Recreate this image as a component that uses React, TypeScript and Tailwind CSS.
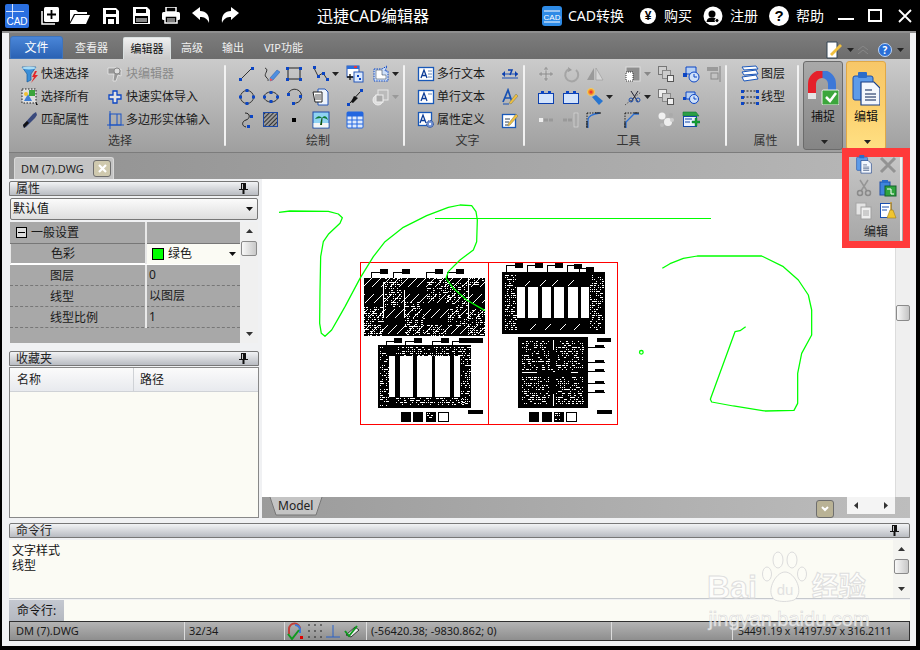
import React from "react";

type P = { children?: React.ReactNode; w?: number; h?: number };
const I = ({ children, w = 18, h = 18 }: P) => (
  <svg width={w} height={h} viewBox={`0 0 ${w} ${h}`} className="block shrink-0">
    {children}
  </svg>
);
const BL = "#0b45c4";
const B = ({ x, y, s = 3 }: { x: number; y: number; s?: number }) => <rect x={x} y={y} width={s} height={s} fill={BL} />;
const Drop = ({ c = "#222" }: { c?: string }) => (
  <svg width={7} height={4} viewBox="0 0 7 4" className="block shrink-0 ml-[2px]">
    <path d="M0 0H7L3.500 4Z" fill={c} />
  </svg>
);

/* title bar icons */
const W = "#ffffff";
const TNew = () => (
  <svg width={18} height={18} viewBox="0 0 18 18" className="block">
    <path d="M1 4V17H14" fill="none" stroke={W} strokeWidth="1.500" />
    <rect x="3" y="0" width="15" height="15" rx="1.500" fill={W} />
    <path d="M10.500 3V12M6 7.500H15" stroke="#000" strokeWidth="1.800" />
  </svg>
);
const TOpen = () => (
  <svg width={20} height={16} viewBox="0 0 20 16" className="block">
    <path d="M0 2H6L8 4H17V6H4L0 14Z" fill={W} />
    <path d="M5 7H20L16 16H0Z" fill={W} />
  </svg>
);
const TSave = () => (
  <svg width={16} height={16} viewBox="0 0 16 16" className="block">
    <path d="M0 0H13L16 3V16H0Z" fill={W} />
    <rect x="3" y="2" width="10" height="4" fill="#000" />
    <rect x="3" y="9" width="10" height="7" fill="#000" />
    <rect x="5" y="11" width="6" height="5" fill={W} />
  </svg>
);
const TSavePdf = () => (
  <svg width={17} height={18} viewBox="0 0 17 18" className="block">
    <path d="M0 0H14L17 3V17H0Z" fill={W} />
    <rect x="3" y="2" width="10" height="4" fill="#000" />
    <rect x="2" y="9" width="13" height="7" fill="#000" />
    <rect x="3" y="11" width="11" height="4" fill="#888" />
  </svg>
);
const TPrint = () => (
  <svg width={18} height={17} viewBox="0 0 18 17" className="block">
    <rect x="4" y="0" width="10" height="5" fill="none" stroke={W} strokeWidth="1.500" />
    <rect x="0" y="5" width="18" height="8" rx="1.500" fill={W} />
    <rect x="3" y="9" width="12" height="7" fill="#000" stroke={W} strokeWidth="1.500" />
    <path d="M5 12H13M5 14H13" stroke={W} />
  </svg>
);
const TUndo = () => (
  <svg width={18} height={17} viewBox="0 0 18 17" className="block">
    <path d="M0 6L8 0V4C14 4 18 8 17 16C15 11 12 10 8 10V13Z" fill={W} />
  </svg>
);
const TRedo = () => (
  <svg width={18} height={17} viewBox="0 0 18 17" className="block">
    <path d="M18 6L10 0V4C4 4 0 8 1 16C3 11 6 10 10 10V13Z" fill={W} />
  </svg>
);
const Logo = () => (
  <div className="relative w-[24px] h-[24px] mt-[1px] rounded-[2px] bg-[#2a6fe0] overflow-hidden flex items-end justify-center">
    <div className="absolute left-[7px] top-0 w-px h-[15px] bg-white/80" />
    <div className="absolute left-[1px] top-[7px] w-[18px] h-px bg-white/80" />
    <span className="text-[10px] leading-[13px] text-white font-['Liberation_Sans',sans-serif]">CAD</span>
  </div>
);

/* select group */
const Funnel = () => (
  <I>
    <path d="M1 2H15L10 9V15L6 17V9Z" fill="#3b8fd8" stroke="#165a9c" strokeWidth=".7" />
    <ellipse cx="8" cy="3" rx="7" ry="1.500" fill="#a9dcf5" />
    <path d="M14 6L11 12H13L10 18L17 10H14L16 6Z" fill="#e2262a" />
  </I>
);
const SelAll = () => (
  <I>
    <rect x="1" y="1" width="14" height="14" fill="#fff8" stroke="#222" strokeDasharray="1.500 1.500" />
    <rect x="8" y="2" width="6" height="6" fill="#3aa43a" />
    <path d="M3 13L7 6L11 13Z" fill="#3d7fd4" />
    <circle cx="5" cy="6" r="2" fill="#f2c230" />
    <path d="M15 14V17H17Z" fill="#111" />
  </I>
);
const Dropper = () => (
  <I>
    <path d="M3 17L2 14L12 3L15 1L16 4L14 7L5 16Z" fill="#39497c" />
    <path d="M3 17L2 14L6 10L8 12Z" fill="#111" />
  </I>
);
const BlockEd = () => (
  <I>
    <path d="M2 3H10L9 7L15 4V11L12 10L10 16H7L8 9H2Z" fill="#989898" stroke="#e8e8e8" strokeWidth=".8" />
    <circle cx="11" cy="6" r="3" fill="#ddd" stroke="#888" />
  </I>
);
const PlusO = () => (
  <I>
    <path d="M7 3H11V7H15V11H11V15H7V11H3V7H7Z" fill="#fff9" stroke={BL} strokeWidth="1.300" />
  </I>
);
const PolyIn = () => (
  <I>
    <rect x="4" y="3" width="11" height="11" fill="none" stroke="#1c55c4" />
    <path d="M1 14H18M4 0V18M11 3V14" stroke="#1c55c4" />
  </I>
);

/* draw group */
const Line = () => (
  <I>
    <path d="M3 14L14 3" stroke="#333" />
    <B x={1} y={13} />
    <B x={13} y={2} />
  </I>
);
const PenCurve = () => (
  <I>
    <path d="M3 3C8 5 1 9 4 12S6 15 6 16" fill="none" stroke="#333" />
    <path d="M8 13L15 5L18 7L11 15L8 16Z" fill="#4e8fe0" stroke="#2a5aa8" strokeWidth=".5" />
    <path d="M8 13L11 15L8 16Z" fill="#e55" />
  </I>
);
const RectI = () => (
  <I>
    <rect x="3" y="3" width="12" height="11" fill="none" stroke="#222" />
    <B x={1} y={2} />
    <B x={14} y={2} />
    <B x={1} y={13} />
    <B x={14} y={13} />
  </I>
);
const Poly = () => (
  <I>
    <path d="M2 3L6 11L11 8L15 14" fill="none" stroke="#333" />
    <B x={1} y={1} />
    <B x={5} y={10} />
    <B x={10} y={7} />
    <B x={14} y={13} />
  </I>
);
const Insert = () => (
  <I>
    <rect x="1" y="1" width="12" height="11" fill="#fff" stroke="#2456b8" />
    <rect x="1" y="1" width="12" height="3" fill="#2f6fd8" />
    <rect x="8" y="1" width="3" height="2" fill="#e33" />
    <rect x="8" y="7" width="9" height="10" fill="#dbe8fb" stroke="#2456b8" />
    <path d="M1 12H7M4 9V15" stroke="#111" strokeWidth="1.300" />
    <rect x="11" y="10" width="2" height="2" fill={BL} />
    <rect x="13" y="13" width="2" height="2" fill={BL} />
  </I>
);
const Region = () => (
  <I>
    <path d="M2 4H10L15 1L13 6H16V16H2Z" fill="#cfe0f8" stroke={BL} strokeDasharray="1.500 1" />
    <path d="M4 5H10V10H14V14H4Z" fill="#fff" stroke="#234" strokeWidth=".5" />
  </I>
);
const Circle = () => (
  <I>
    <circle cx="9" cy="9" r="6.500" fill="none" stroke="#333" />
    <B x={7.500} y={1} />
    <B x={7.500} y={14} />
    <B x={1} y={7.500} />
    <B x={14} y={7.500} />
  </I>
);
const Ellipse = () => (
  <I>
    <ellipse cx="9" cy="9" rx="7" ry="5" fill="none" stroke="#333" />
    <B x={7.500} y={3} />
    <B x={7.500} y={12} />
    <B x={1} y={7.500} />
    <B x={14} y={7.500} />
  </I>
);
const Arc = () => (
  <I>
    <path d="M3 6A7 7 0 1 1 8 15" fill="none" stroke="#333" />
    <B x={2} y={5} />
    <B x={7} y={14} />
    <B x={14} y={7} />
  </I>
);
const Copy = () => (
  <I>
    <path d="M6 1H13L16 4V17H6Z" fill="#eef4fc" stroke="#2456b8" />
    <path d="M1 4H10V14H3Z" fill="#fff" stroke="#222" />
    <path d="M3 7H9M3 9H9M3 11H9" stroke="#555" />
  </I>
);
const Pen = () => (
  <I>
    <path d="M3 16L15 3" stroke="#111" strokeWidth="1" />
    <path d="M5 14L8 8L12 10L7 15Z" fill="#111" />
    <B x={1} y={15} />
    <B x={14} y={1} />
  </I>
);
const GCopy = () => (
  <I>
    <circle cx="6" cy="12" r="5" fill="#ddd" stroke="#eee" />
    <rect x="6" y="2" width="10" height="10" fill="#bbb" stroke="#e8e8e8" />
    <rect x="4" y="7" width="7" height="7" fill="#aaa" stroke="#eee" />
  </I>
);
const Spline = () => (
  <I>
    <path d="M7 2C13 2 12 8 8 9S3 15 8 16" fill="none" stroke="#222" />
    <B x={12} y={4} />
    <B x={9} y={14} />
  </I>
);
const Hatch = () => (
  <I>
    <defs>
      <pattern id="ht" width="3" height="3" patternUnits="userSpaceOnUse" patternTransform="rotate(-45)">
        <rect width="3" height="3" fill="#999" />
        <rect width="3" height="1" fill="#333" />
      </pattern>
    </defs>
    <rect x="1.500" y="1.500" width="14" height="14" fill="url(#ht)" stroke="#1c49a8" />
  </I>
);
const Dot = () => (
  <I>
    <rect x="7" y="7" width="4" height="4" fill="#000" />
  </I>
);
const Palm = () => (
  <I>
    <rect x="1" y="1" width="16" height="16" fill="#8fd3f2" stroke="#1c49a8" />
    <rect x="1.500" y="12" width="15" height="4.500" fill="#f5f5f5" />
    <path d="M8 14L9.500 7H10.500L10 14Z" fill="#115511" />
    <path d="M3 8C6 4 8 5 10 7C12 4 15 5 16 9C13 7 12 7 10 7C8 7 6 7 3 8Z" fill="#0f7a35" />
  </I>
);
const Table = () => (
  <I>
    <rect x="1" y="1" width="16" height="16" rx="1" fill="#dfeafb" stroke="#2266e0" />
    <path d="M1 5H17M1 9H17M1 13H17M6 5V17M11 5V17" stroke="#2266e0" />
    <rect x="1" y="1" width="16" height="4" fill="#2266e0" />
  </I>
);

/* text */
const Doc = ({ l, t }: { l: React.ReactNode; t?: boolean }) => (
  <I>
    <rect x="1.500" y="2.500" width="15" height="13" fill="#fff" stroke="#1858b8" strokeWidth="1.300" />
    <path d="M4 13L7 5L10 13M5 10.500H9" fill="none" stroke="#0e3e98" strokeWidth="1.300" />
    {t ? <path d="M11 6H15" stroke="#6b87b8" /> : l}
  </I>
);
const MText = () => <Doc l={<path d="M11 6H15M11 9H15M11 12H15" stroke="#6b87b8" />} />;
const SText = () => <Doc l={null} t />;
const AttrDef = () => (
  <I>
    <rect x="1.500" y="1.500" width="13" height="13" fill="#fff" stroke="#1858b8" strokeWidth="1.300" />
    <path d="M3 12L6 4L9 12M4 9.500H8" fill="none" stroke="#0e3e98" strokeWidth="1.300" />
    <circle cx="13" cy="13" r="3.500" fill="#6e8ed0" stroke="#2b4f96" strokeDasharray="1.500 .8" />
    <circle cx="13" cy="13" r="1.200" fill="#fff" />
  </I>
);
const Dim = () => (
  <I>
    <path d="M1 9H17" stroke="#1a4fb5" />
    <path d="M1 9L4 6V12Z M17 9L14 6V12Z" fill="#0b3fae" />
    <path d="M1 13H17" stroke="#1a4fb5" />
    <path d="M7 5H11L9 10" fill="none" stroke="#0b3fae" strokeWidth="1.500" />
  </I>
);
const TxtStyle = () => (
  <I>
    <path d="M2 14L7 2L11 14M4 10H10" fill="none" stroke="#1751b3" strokeWidth="1.700" />
    <path d="M8 15L15 6L17 8L10 16Z" fill="#f0c040" stroke="#775" strokeWidth=".5" />
    <path d="M2 16H8" stroke="#1751b3" />
  </I>
);
const TxtEdit = () => (
  <I>
    <rect x="1.500" y="3.500" width="13" height="13" fill="#fff" stroke="#1858b8" strokeWidth="1.300" />
    <path d="M4 8H9M4 11H8M4 14H7" stroke="#345" />
    <path d="M7 13L15 3L17 5L9 14L7 15Z" fill="#f0c040" stroke="#775" strokeWidth=".5" />
  </I>
);

/* tools */
const G = "#9b9b9b";
const Move = () => (
  <I>
    <path d="M8 5H10V8H13V6L17 9L13 12V10H10V13H12L9 17L6 13H8V10H5V12L1 9L5 6V8H8V5H6L9 1L12 5H10" fill={G} stroke="#d4d4d4" strokeWidth=".6" />
  </I>
);
const Rot = () => (
  <I>
    <path d="M6 2L10 5L6 7Z" fill={G} />
    <path d="M7 4A6.500 6.500 0 1 0 14 5" fill="none" stroke="#a5a5a5" strokeWidth="2" />
  </I>
);
const Mirror = () => (
  <I>
    <path d="M8 3L1 15H8Z" fill="#9a9a9a" />
    <path d="M10 3L17 15H10Z" fill="#d6d6d6" stroke="#999" strokeWidth=".6" />
  </I>
);
const Gblock = () => (
  <I>
    <rect x="2" y="2" width="14" height="14" fill="#8e8e8e" stroke="#ddd" />
    <rect x="2" y="7" width="7" height="9" fill="#fff" stroke="#333" strokeDasharray="1 1" />
  </I>
);
const Squares = ({ gray }: { gray?: boolean }) => (
  <I>
    <rect x="1.500" y="1.500" width="8" height="8" fill={gray ? "#cfcfcf" : "#eee"} stroke="#777" />
    <rect x="5.500" y="5.500" width="8" height="8" fill="#ccc" stroke="#888" />
    <rect x="10.500" y="10.500" width="6" height="6" fill="#eee" stroke="#555" />
  </I>
);
const Clock = () => (
  <I>
    <path d="M4 2H14V9H4Z" fill="#b7d0f3" stroke={BL} />
    <B x={1} y={8} s={4} />
    <circle cx="12" cy="12" r="5" fill="#cfe0f8" stroke={BL} />
    <path d="M12 9V12H15" fill="none" stroke={BL} />
  </I>
);
const Clock2 = () => (
  <I>
    <path d="M4 4H13V11H4Z" fill="#b7d0f3" stroke={BL} />
    <B x={1} y={9} s={3} />
    <circle cx="12" cy="11" r="4.500" fill="#cfe0f8" stroke={BL} />
    <path d="M12 8.500V11H14.500" fill="none" stroke={BL} />
  </I>
);
const Dlist = () => (
  <I>
    <rect x="1" y="2" width="11" height="4" fill="#9a9a9a" />
    <rect x="5" y="8" width="7" height="6" fill="none" stroke="#8a8a8a" />
    <path d="M14 1V17" stroke="#999" strokeWidth="1.500" />
  </I>
);
const Battery = () => (
  <I>
    <rect x="1.500" y="5.500" width="15" height="10" fill="#d4e4fc" stroke="#0b3fae" />
    <rect x="4" y="3" width="3" height="3" fill={BL} />
    <rect x="11" y="3" width="3" height="3" fill={BL} />
  </I>
);
const Paint = () => (
  <I>
    <circle cx="5" cy="4" r="3.500" fill="#f4892a" stroke="#f5d35a" />
    <circle cx="5" cy="4" r="1.500" fill="#e33" />
    <path d="M6 9L10 7L17 13L13 17Z" fill="#2875d0" />
  </I>
);
const Scissor = () => (
  <I>
    <path d="M1 17L17 4" stroke="#555" strokeDasharray="1.500 1.500" />
    <path d="M7 3L14 14M14 3L7 14" stroke="#223" />
    <circle cx="7" cy="12" r="2" fill="none" stroke="#1c4fb0" />
    <circle cx="14" cy="12" r="2" fill="none" stroke="#1c4fb0" />
  </I>
);
const Dashes = () => (
  <I>
    <path d="M2 9H6" stroke="#eee" strokeWidth="4" />
    <path d="M7 9H11M12 9H16" stroke="#999" strokeWidth="3" />
  </I>
);
const Dashes2 = () => (
  <I>
    <path d="M1 9H5M6 9H10" stroke="#999" strokeWidth="3" />
    <rect x="12" y="2" width="4" height="14" fill="#aaa" stroke="#ddd" strokeWidth=".6" />
  </I>
);
const Fillet = () => (
  <I>
    <path d="M1 2H14M1 2V17" fill="none" stroke="#111" strokeDasharray="1.300 1.300" />
    <path d="M2 17V9C2 5 6 3 14 2" fill="none" stroke="#2a70d8" strokeWidth="1.300" />
    <path d="M1 17V10M9 2H15" stroke="#111" />
  </I>
);
const Chamfer = () => (
  <I>
    <path d="M1 2H14M1 2V17" fill="none" stroke="#111" strokeDasharray="1.300 1.300" />
    <path d="M2 17V11L10 3H15" fill="none" stroke="#2a70d8" strokeWidth="1.300" />
    <path d="M1 17V11M10 2H15" stroke="#111" />
  </I>
);
const Balls = () => (
  <I>
    <circle cx="5" cy="5" r="3.500" fill="#f0f0f0" />
    <circle cx="11" cy="11" r="4" fill="#eee" />
    <circle cx="14" cy="4" r="2" fill="#aaa" />
    <circle cx="5" cy="14" r="2" fill="#bbb" />
    <circle cx="15" cy="9" r="2" fill="#ccc" />
  </I>
);
const GreenAdd = () => (
  <I>
    <path d="M1 1H14L17 5H1Z" fill="#2c9f47" stroke="#127a30" strokeWidth=".6" />
    <rect x="1.500" y="5.500" width="13" height="10" fill="#eaf2ff" stroke="#1348a8" />
    <path d="M3 8H10M3 11H8" stroke="#1348a8" />
    <path d="M10 10H13V7H15V10H18V12H15V15H13V12H10Z" fill="#16a02e" stroke="#074" strokeWidth=".4" />
  </I>
);
const Layers = () => (
  <I>
    <path d="M1 2L15 1L17 4L3 5Z" fill="#fff" stroke="#1b57bb" />
    <path d="M1 7L15 5L17 9L3 10Z" fill="#fff" stroke="#1b57bb" />
    <path d="M1 12L15 10L17 14L3 16Z" fill="#fff" stroke="#1b57bb" />
  </I>
);
const LineT = () => (
  <I>
    <path d="M2 3H16M2 15H16M2 9H16" stroke="#222" strokeDasharray="2 1.500" />
    <B x={0} y={2} />
    <B x={15} y={2} />
    <B x={0} y={8} />
    <B x={15} y={8} />
    <B x={0} y={14} />
    <B x={15} y={14} />
  </I>
);

const Magnet = () => (
  <svg width={32} height={34} viewBox="0 0 32 34" className="block">
    <defs>
      <linearGradient id="mg" x1="0" x2="1" y1="0" y2="0">
        <stop offset="0" stopColor="#e5202a" />
        <stop offset=".5" stopColor="#e5202a" />
        <stop offset=".55" stopColor="#3d78d8" />
        <stop offset="1" stopColor="#3d78d8" />
      </linearGradient>
    </defs>
    <path d="M5 26V13A10 10 0 0 1 25 13V20" fill="none" stroke="url(#mg)" strokeWidth="8" />
    <rect x="1" y="22" width="8" height="6" fill="#e4e4e4" />
    <rect x="15" y="19" width="17" height="15" rx="1.500" fill="#3ca63c" stroke="#eee" />
    <path d="M19 26L23 30L29 22" fill="none" stroke="#fff" strokeWidth="2.500" />
  </svg>
);
const Clip = ({ s = 1 }: { s?: number }) => (
  <svg width={28 * s} height={34 * s} viewBox="0 0 28 34" className="block">
    <rect x="1" y="4" width="20" height="24" rx="2" fill="#5d9be8" stroke="#1e4ea6" />
    <rect x="6" y="0" width="9" height="6" rx="1" fill="#2b6cc9" />
    <path d="M9 10H22L28 16V33H9Z" fill="#f3f7fd" stroke="#1a3f86" strokeWidth="1.200" />
    <path d="M13 18H20M13 22H24M13 25H24M13 28H24" stroke="#54678a" strokeWidth="1.500" />
  </svg>
);
const XG = () => (
  <I>
    <path d="M2 2L16 16M16 2L2 16" stroke="#939393" strokeWidth="3" />
  </I>
);
const Scis = () => (
  <I>
    <path d="M5 1L12 12M13 1L6 12" stroke="#959595" strokeWidth="1.500" />
    <circle cx="5" cy="14" r="2.500" fill="none" stroke="#8a8a8a" strokeWidth="1.500" />
    <circle cx="13" cy="14" r="2.500" fill="none" stroke="#8a8a8a" strokeWidth="1.500" />
  </I>
);
const PasteG = () => (
  <I>
    <rect x="1" y="3" width="10" height="13" fill="#3f84dc" stroke="#1e4ea6" />
    <rect x="3" y="1" width="6" height="3" fill="#2b6cc9" />
    <rect x="6" y="7" width="11" height="10" fill="#2fa43d" stroke="#14602a" />
    <path d="M8 10H12V15H15" fill="none" stroke="#fff" />
  </I>
);
const CopyG = () => (
  <I>
    <rect x="1" y="1" width="10" height="12" fill="#e4e4e4" stroke="#a5a5a5" />
    <rect x="6" y="5" width="10" height="12" fill="#efefef" stroke="#a0a0a0" />
    <path d="M8 9H14M8 11H14M8 13H14" stroke="#aaa" />
  </I>
);
const Broom = () => (
  <I>
    <rect x="1.500" y="1.500" width="11" height="14" fill="#fff" stroke="#1a4fb0" />
    <path d="M3 5H10M3 8H8" stroke="#1a4fb0" />
    <path d="M12 0V8" stroke="#c9982a" strokeWidth="1.500" />
    <path d="M8 16L11 8H14L17 16Z" fill="#f0c530" stroke="#a07c18" strokeWidth=".6" />
  </I>
);
const Pin = () => (
  <svg width={9} height={11} viewBox="0 0 9 11" className="block">
    <path d="M2 0H7V6H9V7H5.500V11H3.500V7H0V6H2Z" fill="#111" />
    <path d="M3 1V6H4V1Z" fill="#ccc" />
  </svg>
);

const Sep = () => <div className="w-[2px] my-[6px] bg-[#f2f2f2] rounded-full shrink-0" />;

const Row = ({ icon, text, gray }: { icon: React.ReactNode; text: string; gray?: boolean }) => (
  <div className="h-[23px] flex items-center gap-[2px]">
    {icon}
    <span className={gray ? "text-[#8a8a8a] whitespace-nowrap" : "text-[#1a1a1a] whitespace-nowrap"}>{text}</span>
  </div>
);
const Cell = ({ children }: P) => <div className="h-[23px] flex items-center">{children}</div>;
const Label = ({ children }: P) => (
  <div className="absolute bottom-0 left-0 right-0 h-[22px] pl-[7px] flex items-center justify-center text-[#333] text-[12px]">{children}</div>
);
const Header = ({ title, pin = true, cls = "" }: { title: string; pin?: boolean; cls?: string }) => (
  <div className={`h-[15px] flex items-center justify-between pl-[6px] pr-[10px] border border-[#777] rounded-t-[2px] bg-linear-to-b from-[#f2f3f5] to-[#b9bcc2] text-[12px] leading-[14px] text-[#222] ${cls}`}>
    <span>{title}</span>
    {pin && <Pin />}
  </div>
);
const VBar = ({ cls = "" }: { cls?: string }) => (
  <div className={`flex flex-col items-center justify-between bg-[#f0f0f0] py-[7px] ${cls}`}>
    <svg width={7} height={4} viewBox="0 0 7 4" className="block"><path d="M0 4H7L3.500 0Z" fill="#333" /></svg>
    <div className="flex-1 relative w-full">
      <div className="absolute top-[8px] left-[1px] right-[1px] h-[15px] rounded-[2px] bg-linear-to-r from-[#f8f8f8] to-[#c8c8c8] border border-[#8a8a8a]" />
    </div>
    <svg width={7} height={4} viewBox="0 0 7 4" className="block"><path d="M0 0H7L3.500 4Z" fill="#333" /></svg>
  </div>
);
const PropRow = ({ n, v, cls = "" }: { n: string; v: string; cls?: string }) => (
  <div className={`h-[21px] flex items-center border-b border-dashed border-[#777] ${cls}`}>
    <span className="w-[137px] pl-[40px] shrink-0 border-r-2 border-[#e8e8e8] h-[21px] leading-[21px]">{n}</span>
    <span className="pl-[2px]">{v}</span>
  </div>
);

/* CAD drawing */
function noise(x: number, y: number, w: number, h: number, seed: number, density = 0.5) {
  let s = seed * 7919 + 13;
  let d = "";
  for (let j = 0; j < h; j += 2) {
    for (let i = 0; i < w; i += 2) {
      s = (s * 1103515245 + 12345) & 0x7fffffff;
      if ((s >> 8) % 100 < density * 100) {
        const l = (s >> 16) % 3 === 0 ? 2 : 1;
        d += `M${x + i} ${y + j}h${l}v1h-${l}z`;
      }
    }
  }
  return d;
}
const Tag = ({ x, y, ly, rx, ry, rw = 8 }: { x: number; y: number; ly: number; rx: number; ry: number; rw?: number }) => (
  <g>
    <path d={`M${x + 0.5} ${y}V${ly + 0.5}H${rx}`} fill="none" stroke="#000" />
    <rect x={rx} y={ry} width={rw} height={5} fill="#000" />
  </g>
);
const Drawing = () => {
  const n1 = [
    [383, 278, 20, 29], [364, 307, 19, 29], [405, 302, 20, 34], [427, 278, 21, 23],
    [427, 325, 20, 11], [448, 283, 20, 44], [468, 278, 17, 8], [468, 310, 17, 26],
  ];
  const n2 = [
    [380, 347, 9, 59], [396, 347, 70, 9], [461, 347, 9, 59], [396, 398, 70, 8],
  ];
  const n3 = [[505, 275, 12, 55], [590, 275, 13, 55]];
  const n4 = [
    [522, 341, 28, 30], [556, 341, 28, 30], [522, 377, 28, 28], [556, 377, 28, 28], [551, 367, 5, 6],
  ];
  const w1 = [389, 400, 417, 435, 454];
  const w1w = [6, 13, 15, 15, 6];
  const w3 = [517, 528, 542, 554, 568, 581];
  const w3w = [8, 10, 9, 10, 10, 8];
  const all = (a: number[][], sd: number) => a.map((r, i) => noise(r[0], r[1], r[2], r[3], sd + i)).join("");
  let hatch = "";
  for (let c = 372; c < 550; c += 9) hatch += `M${c} 278L${c - 58} 336`;
  return (
    <svg width={633} height={318} viewBox="262 179 633 318" className="block absolute inset-0" shapeRendering="crispEdges">
      <defs>
        <clipPath id="b1"><rect x="364" y="278" width="121" height="58" /></clipPath>
      </defs>
      <rect x="360.500" y="262.500" width="257" height="162" fill="none" stroke="#ff0000" />
      <path d="M488.500 262V425" stroke="#ff0000" />
      <rect x="364" y="278" width="121" height="58" fill="#000" />
      <path d={hatch} stroke="#fff" strokeDasharray="13 9" clipPath="url(#b1)" />
      <path d={all(n1, 3)} fill="#fff" />
      <path d="M383.500 282V318M404.500 290V318M468.500 278V318" stroke="#fff" />
      <rect x="378" y="345" width="93" height="63" fill="#000" />
      <path d={all(n2, 21)} fill="#fff" />
      {w1.map((x, i) => (
        <rect key={x} x={x} y={356} width={w1w[i]} height={41} fill="#fff" />
      ))}
      <rect x="502" y="272" width="103" height="62" fill="#000" />
      <path d={all(n3, 40)} fill="#fff" />
      <path d="M525 286L530 281M540 286L546 280M552 286L558 280M568 286L574 280M530 330L536 324M545 330L551 324M560 330L566 324M574 330L580 324" stroke="#fff" />
      {w3.map((x, i) => (
        <rect key={x} x={x} y={287} width={w3w[i]} height={31} fill="#fff" />
      ))}
      <rect x="518" y="337" width="70" height="71" fill="#000" />
      <path d={all(n4, 60)} fill="#fff" />
      <path d="M522 372.500H537M571 372.500H578M553.500 340V350M553.500 394V406" stroke="#fff" />
      <Tag x={371} y={278} ly={272} rx={380} ry={269} />
      <Tag x={393} y={278} ly={272} rx={402} ry={269} />
      <Tag x={426} y={278} ly={272} rx={435} ry={269} />
      <Tag x={447} y={278} ly={272} rx={456} ry={269} />
      <Tag x={386} y={345} ly={341} rx={394} ry={338} />
      <Tag x={405} y={345} ly={341} rx={414} ry={338} />
      <Tag x={432} y={345} ly={341} rx={441} ry={338} />
      <Tag x={452} y={345} ly={341} rx={459} ry={338} rw={24} />
      <Tag x={506} y={272} ly={265} rx={515} ry={263} />
      <Tag x={527} y={272} ly={265} rx={535} ry={263} />
      <Tag x={547} y={272} ly={265} rx={555} ry={263} />
      <Tag x={567} y={272} ly={265} rx={574} ry={264} />
      <Tag x={579} y={272} ly={268} rx={586} ry={267} />
      {[347, 362, 371, 383, 392].map((y) => (
        <g key={y}>
          <path d={`M588 ${y + 0.5}H605`} stroke="#000" />
          <rect x="595" y={y - 2} width="9" height="3" fill="#000" />
        </g>
      ))}
      <rect x="597" y="338" width="14" height="4" fill="#000" />
      <rect x="468" y="410" width="15" height="4" fill="#000" />
      <rect x="597" y="410" width="15" height="4" fill="#000" />
      {[401, 413, 426].map((x) => (
        <rect key={x} x={x} y={412} width={10} height={10} fill="#000" />
      ))}
      <rect x="438.500" y="412.500" width="10" height="9" fill="#fff" stroke="#000" />
      {[529, 542, 554].map((x) => (
        <rect key={x} x={x} y={412} width={10} height={10} fill="#000" />
      ))}
      <rect x="566.500" y="412.500" width="10" height="9" fill="#fff" stroke="#000" />
      <path d={noise(427, 413, 8, 8, 90)} fill="#fff" />
      <path d={noise(555, 413, 8, 8, 91)} fill="#fff" />
      <g transform="translate(260 195) scale(.33333)" fill="none" stroke="#00ff00" strokeWidth="3.800" strokeLinejoin="round" shapeRendering="auto">
        <path d="M57 52L90 48L205 49L235 57L247 68L240 85L205 118L190 140L182 185L180 290L179 385L184 415L195 424L215 405L235 370L255 335L300 250L340 185L375 140L430 97L500 62L565 37L600 30L635 32L648 50L652 75L650 140L640 165L600 195L565 230L558 250L580 280L620 315L675 347" />
      </g>
      <path d="M435 218.500H711" stroke="#00ff00" />
      <g transform="translate(620 240) scale(.33333)" fill="none" stroke="#00ff00" strokeWidth="3.800" strokeLinejoin="round" shapeRendering="auto">
        <path d="M127 85L150 71L190 55L232 48H425L490 80L535 120L565 165L575 210V285L545 340L533 400V490L522 511L435 513L340 498L275 486L271 478L345 275L360 272L377 260" />
        <circle cx="64" cy="337" r="5.500" />
      </g>
    </svg>
  );
};

export default function App() {
  return (
    <div className="relative w-[920px] h-[650px] overflow-hidden bg-black flex flex-col text-[12px] leading-[16px] text-[#111] font-['Noto_Sans','Noto_Sans_CJK_SC',sans-serif]">
      {/* title bar */}
      <div className="h-[31px] shrink-0 flex items-center text-white relative">
        <div className="w-[35px] pl-[5px] flex"><Logo /></div>
        <div className="w-[30px] flex justify-center"><TNew /></div>
        <div className="w-[30px] flex justify-center"><TOpen /></div>
        <div className="w-[31px] flex justify-center"><TSave /></div>
        <div className="w-[30px] flex justify-center"><TSavePdf /></div>
        <div className="w-[30px] flex justify-center"><TPrint /></div>
        <div className="w-[30px] flex justify-center"><TUndo /></div>
        <div className="w-[28px] flex justify-center"><TRedo /></div>
        <div className="ml-[73px] w-[114px] text-[16px] whitespace-nowrap">迅捷CAD编辑器</div>
        <div className="ml-[111px] flex items-center text-[14px] whitespace-nowrap">
          <svg width={20} height={20} viewBox="0 0 20 20" className="block mr-[6px]">
            <rect width="20" height="20" rx="3" fill="#2e8be6" />
            <path d="M2 5H18M2 16H18" stroke="#fff" strokeWidth="1.200" />
            <text x="10" y="13.500" fontSize="8" textAnchor="middle" fill="#fff" fontFamily="Liberation Sans">CAD</text>
          </svg>
          <span className="w-[60px]">CAD转换</span>
          <span className="ml-[12px] w-[16px] h-[16px] rounded-full bg-white text-black flex items-center justify-center text-[12px] font-bold font-['Liberation_Sans',sans-serif]">¥</span>
          <span className="ml-[8px] w-[28px]">购买</span>
          <svg width={20} height={20} viewBox="0 0 20 20" className="block ml-[11px]">
            <circle cx="10" cy="10" r="9.500" fill="#fff" />
            <circle cx="9" cy="8" r="3.500" fill="#000" />
            <path d="M3.500 16C4 12 7 11.500 9 11.500S13 12 13.500 14V16Z" fill="#000" />
            <circle cx="14" cy="14.500" r="2" fill="#000" stroke="#fff" />
          </svg>
          <span className="ml-[7px] w-[28px]">注册</span>
          <span className="ml-[11px] w-[20px] h-[20px] rounded-full bg-white text-black flex items-center justify-center text-[15px] font-bold font-['Liberation_Sans',sans-serif]">?</span>
          <span className="ml-[7px] w-[28px]">帮助</span>
          <div className="ml-[14px] w-[16px] h-[2px] mt-[6px] bg-white" />
          <div className="ml-[14px] w-[14px] h-[13px] border-2 border-white" />
          <svg width={14} height={14} viewBox="0 0 14 14" className="block ml-[16px]">
            <path d="M1 1L13 13M13 1L1 13" stroke="#fff" strokeWidth="1.800" />
          </svg>
        </div>
      </div>

      {/* window body */}
      <div className="relative ml-[2px] mr-[4px] mb-[4px] flex-1 min-h-0 bg-[#f0f1f3] border-t-2 border-[#8f8f8f] pl-[7px] pr-[6px] flex flex-col">
        {/* tabs */}
        <div className="h-[26px] shrink-0 flex items-end bg-linear-to-b from-[#7d7d7d] to-[#6c6c6c] text-[11px] text-[#f0f0f0] relative">
          <div className="ml-[1px] w-[53px] h-[23px] rounded-t-[3px] bg-linear-to-b from-[#4a86d8] to-[#2a62b4] border border-[#3e74bd] flex items-center justify-center text-[12px] text-white">文件</div>
          <div className="ml-[12px] w-[33px] h-[23px] flex items-center whitespace-nowrap">查看器</div>
          <div className="ml-[15px] w-[48px] h-[22px] rounded-t-[2px] bg-linear-to-b from-[#f0f0f0] to-[#c9c9c9] border border-[#d9e0e0] border-b-0 flex items-center justify-center text-[#111] whitespace-nowrap">编辑器</div>
          <div className="ml-[10px] w-[22px] h-[23px] flex items-center">高级</div>
          <div className="ml-[19px] w-[22px] h-[23px] flex items-center">输出</div>
          <div className="ml-[20px] h-[23px] flex items-center whitespace-nowrap">VIP功能</div>
          <div className="absolute right-[6px] top-[8px] flex items-center">
            <svg width={20} height={18} viewBox="0 0 20 18" className="block">
              <path d="M2 1H12V17H2Z" fill="#fff" stroke="#345" />
              <path d="M5 13L15 3L17 5L7 15Z" fill="#f0c040" />
            </svg>
            <Drop />
            <svg width={10} height={8} viewBox="0 0 10 8" className="block ml-[4px] mr-[10px]">
              <path d="M0 4L5 0L10 4M0 8L5 4L10 8" fill="none" stroke="#888" />
            </svg>
            <div className="w-[14px] h-[14px] rounded-full bg-[#2a6fd6] border border-[#bcd4f4] text-white text-[10px] font-bold flex items-center justify-center">?</div>
            <div className="ml-[3px]"><Drop /></div>
          </div>
        </div>

        {/* ribbon */}
        <div className="relative h-[94px] shrink-0 flex bg-linear-to-b from-[#cbcbcb] to-[#9f9f9f] border-b border-[#7c7c7c] text-[12px]">
          <div className="relative w-[215px] shrink-0 pt-[3px] pl-[12px] flex">
            <div className="w-[85px]">
              <Row icon={<Funnel />} text="快速选择" />
              <Row icon={<SelAll />} text="选择所有" />
              <Row icon={<Dropper />} text="匹配属性" />
            </div>
            <div>
              <Row icon={<BlockEd />} text="块编辑器" gray />
              <Row icon={<PlusO />} text="快速实体导入" />
              <Row icon={<PolyIn />} text="多边形实体输入" />
            </div>
            <Label>选择</Label>
          </div>
          <Sep />
          <div className="relative w-[177px] shrink-0 pt-[3px] pl-[12px] grid grid-cols-[24px_23px_27px_34px_26px_30px] auto-rows-[23px]">
            <Cell><Line /></Cell><Cell><PenCurve /></Cell><Cell><RectI /></Cell><Cell><Poly /><Drop /></Cell><Cell><Insert /></Cell><Cell><Region /><Drop /></Cell>
            <Cell><Circle /></Cell><Cell><Ellipse /></Cell><Cell><Arc /></Cell><Cell><Copy /></Cell><Cell><Pen /></Cell><Cell><GCopy /><Drop c="#999" /></Cell>
            <Cell><Spline /></Cell><Cell><Hatch /></Cell><Cell><Dot /></Cell><Cell><Palm /></Cell><Cell><Table /></Cell><Cell />
            <Label>绘制</Label>
          </div>
          <Sep />
          <div className="relative w-[118px] shrink-0 pt-[3px] pl-[12px] flex">
            <div className="w-[84px]">
              <Row icon={<MText />} text="多行文本" />
              <Row icon={<SText />} text="单行文本" />
              <Row icon={<AttrDef />} text="属性定义" />
            </div>
            <div>
              <Cell><Dim /></Cell>
              <Cell><TxtStyle /></Cell>
              <Cell><TxtEdit /></Cell>
            </div>
            <Label>文字</Label>
          </div>
          <Sep />
          <div className="relative w-[200px] shrink-0 pt-[3px] pl-[12px] grid grid-cols-[25px_24px_38px_33px_25px_24px_18px] auto-rows-[23px]">
            <Cell><Move /></Cell><Cell><Rot /></Cell><Cell><Mirror /></Cell><Cell><Gblock /><Drop c="#888" /></Cell><Cell><Squares gray /></Cell><Cell><Clock /></Cell><Cell><Dlist /></Cell>
            <Cell><Battery /></Cell><Cell><Battery /></Cell><Cell><Paint /><Drop /></Cell><Cell><Scissor /><Drop /></Cell><Cell><Squares /></Cell><Cell><Clock2 /></Cell><Cell />
            <Cell><Dashes /></Cell><Cell><Dashes2 /></Cell><Cell><Fillet /></Cell><Cell><Chamfer /></Cell><Cell><Balls /></Cell><Cell><GreenAdd /></Cell><Cell />
            <Label>工具</Label>
          </div>
          <Sep />
          <div className="relative w-[70px] shrink-0 pt-[3px] pl-[14px]">
            <Row icon={<Layers />} text="图层" />
            <Row icon={<LineT />} text="线型" />
            <Label>属性</Label>
          </div>
          <Sep />
          <div className="ml-[4px] mt-[2px] w-[40px] h-[89px] shrink-0 rounded-[3px] border border-[#6b6b6b] bg-linear-to-b from-[#a9a9a9] to-[#858585] flex flex-col items-center pt-[9px]">
            <Magnet />
            <span className="mt-[4px] text-[#111]">捕捉</span>
            <div className="mt-auto mb-[5px]"><Drop /></div>
          </div>
          <div className="ml-[3px] mt-[2px] w-[40px] h-[89px] shrink-0 rounded-[3px] border border-[#e0a846] bg-linear-to-b from-[#f7c768] via-[#fbd06e] to-[#ffe083] flex flex-col items-center pt-[10px]">
            <Clip />
            <span className="mt-[3px] text-[#111]">编辑</span>
            <div className="mt-auto mb-[5px]"><Drop /></div>
          </div>
        </div>

        {/* doc tabs */}
        <div className="h-[26px] shrink-0 flex items-end pl-[5px] bg-linear-to-r from-[#919191] to-[#b8b8b8]">
          <div className="w-[100px] h-[22px] rounded-t-[3px] bg-[#c4c4c4] border border-[#d8d8d8] border-b-0 flex items-center pl-[6px] text-[11px] text-[#222]">
            <span className="w-[72px] whitespace-nowrap">DM (7).DWG</span>
            <div className="w-[18px] h-[17px] rounded-[3px] border border-[#6e6e6e] bg-[#cfc9ae] flex items-center justify-center">
              <svg width={9} height={9} viewBox="0 0 9 9" className="block"><path d="M1 1L8 8M8 1L1 8" stroke="#fff" strokeWidth="2.200" /></svg>
            </div>
          </div>
        </div>

        {/* main area */}
        <div className="flex-1 min-h-0 flex flex-col">
          <div className="h-[339px] shrink-0 flex">
            {/* left panels */}
            <div className="w-[250px] shrink-0 pt-[2px] flex flex-col">
              <Header title="属性" />
              <div className="mt-[2px] ml-px mr-px h-[22px] rounded-[2px] border border-[#777] bg-linear-to-b from-[#fbfbfb] to-[#dedede] flex items-center justify-between px-[2px] pr-[4px]">
                <span>默认值</span>
                <Drop c="#111" />
              </div>
              <div className="ml-px h-[121px] w-[248px] mt-[2px] flex bg-[#f0f0f0]">
                <div className="w-[230px] bg-[#a8a8a8] text-[12px] text-[#1a1a1a]">
                  <div className="h-[22px] flex items-center border-b border-[#777]">
                    <div className="w-[137px] border-r-2 border-[#e8e8e8] h-[22px] flex items-center pl-[6px] shrink-0">
                      <div className="w-[11px] h-[11px] border border-black bg-[#ddd] flex items-center justify-center mr-[4px]">
                        <div className="w-[7px] h-px bg-black" />
                      </div>
                      一般设置
                    </div>
                  </div>
                  <div className="h-[21px] flex items-center border-b-2 border-white">
                    <span className="w-[137px] pl-[40px] border-r-2 border-[#e8e8e8] h-[20px] leading-[20px] shrink-0 border-l border-[#666]">色彩</span>
                    <div className="flex-1 h-[20px] flex items-center bg-[#fbfbf4] pl-[5px] pr-[4px]">
                      <div className="w-[12px] h-[12px] bg-[#00ff00] border border-black mr-[4px]" />
                      <span className="flex-1">绿色</span>
                      <Drop c="#111" />
                    </div>
                  </div>
                  <PropRow n="图层" v="0" />
                  <PropRow n="线型" v="以图层" />
                  <PropRow n="线型比例" v="1" />
                </div>
                <VBar cls="w-[18px]" />
              </div>
              <div className="h-[8px] shrink-0" />
              <Header title="收藏夹" />
              <div className="mt-px flex-1 border border-[#888] bg-[#fbfbf4] min-h-0">
                <div className="h-[24px] flex items-center bg-linear-to-b from-[#fbfbfb] to-[#e8eaee] border-b border-[#cfd2d6] text-[#222]">
                  <span className="w-[124px] pl-[7px] border-r border-[#cfd2d6] h-[23px] leading-[23px]">名称</span>
                  <span className="pl-[6px]">路径</span>
                </div>
              </div>
            </div>
            {/* canvas */}
            <div className="flex-1 min-w-0 ml-[3px] flex flex-col">
              <div className="h-[318px] shrink-0 flex">
                <div className="relative w-[633px] bg-white overflow-hidden"><Drawing /></div>
                <div className="flex-1 bg-[#efefef] relative border-l border-[#dcdcdc]">
                  <div className="absolute left-0 right-0 top-[126px] h-[16px] rounded-[2px] border border-[#8a8a8a] bg-linear-to-r from-[#f8f8f8] to-[#c4c4c4]" />
                </div>
              </div>
              <div className="h-[21px] shrink-0 flex bg-linear-to-r from-[#9b9b9b] to-[#bdbdbd] relative">
                <svg width={54} height={19} viewBox="0 0 54 19" className="block ml-[7px]">
                  <path d="M1 0L7 18H47L53 0" fill="#c4c4c4" stroke="#777" />
                </svg>
                <span className="absolute left-[16px] top-[1px] text-[12px] leading-[16px] text-[#222]">Model</span>
                <div className="absolute left-[554px] top-[3px] w-[18px] h-[18px] rounded-[3px] border border-[#6e6e6e] bg-[#b9b295] flex items-center justify-center">
                  <svg width={8} height={6} viewBox="0 0 8 6" className="block"><path d="M1 1L4 4L7 1" fill="none" stroke="#fff" strokeWidth="2" /></svg>
                </div>
                <div className="absolute left-[585px] top-0 w-[48px] h-[17px] bg-[#f4f4f4] flex items-center justify-between px-[7px]">
                  <svg width={4} height={7} viewBox="0 0 4 7" className="block"><path d="M4 0V7L0 3.500Z" fill="#333" /></svg>
                  <svg width={4} height={7} viewBox="0 0 4 7" className="block"><path d="M0 0V7L4 3.500Z" fill="#333" /></svg>
                </div>
              </div>
            </div>
          </div>

          {/* command */}
          <div className="mt-[5px] h-[15px] shrink-0">
            <Header title="命令行" />
          </div>
          <div className="mt-[2px] h-[59px] shrink-0 flex bg-[#fbfbf4] border-b border-[#c5c8cc]">
            <div className="flex-1 pl-[3px] pt-[3px] text-[12px] leading-[15px] text-[#111]">
              <div>文字样式</div>
              <div>线型</div>
            </div>
            <VBar cls="w-[17px] !bg-[#f4f4f0]" />
          </div>
          <div className="mt-px h-[21px] shrink-0 flex bg-[#fbfbf4]">
            <div className="w-[55px] bg-linear-to-b from-[#c4c8d0] to-[#b4b8c0] pl-[8px] leading-[21px] text-[#111] whitespace-nowrap">命令行:</div>
          </div>
          <div className="h-[20px] shrink-0 flex items-stretch border border-[#2f2f2f] bg-linear-to-b from-[#b4b4b4] to-[#8e8e8e] text-[11px] leading-[18px] text-[#1a1a1a] whitespace-nowrap overflow-hidden">
            <span className="w-[175px] pl-[6px] border-r border-[#dcdcdc]">DM (7).DWG</span>
            <span className="w-[100px] pl-[4px] border-r border-[#dcdcdc]">32/34</span>
            <div className="w-[82px] flex items-center pl-px border-r border-[#dcdcdc]">
              <svg width={19} height={18} viewBox="0 0 19 18" className="block">
                <path d="M3 12V7A5.500 5.500 0 0 1 14 7V11" fill="none" stroke="#c0403a" strokeWidth="2" />
                <path d="M9 3A5.500 5.500 0 0 1 14 7V11" fill="none" stroke="#3d78d8" strokeWidth="2" />
                <path d="M2 12L6 17L13 8" fill="none" stroke="#0f9a1f" strokeWidth="2" />
                <rect x="14" y="14" width="3" height="3" fill="#d00" />
              </svg>
              <svg width={20} height={18} viewBox="0 0 20 18" className="block">
                <path d="M3 3H5M9 3H11M15 3H17M3 9H5M9 9H11M15 9H17M3 15H5M9 15H11M15 15H17" stroke="#222" />
              </svg>
              <svg width={18} height={18} viewBox="0 0 18 18" className="block">
                <path d="M1 15H15M8 3V15" stroke="#2a62c8" />
              </svg>
              <svg width={19} height={18} viewBox="0 0 19 18" className="block">
                <path d="M3 13L12 5L16 8L8 15Z" fill="#eee" stroke="#333" />
                <path d="M2 9L6 14L14 4" fill="none" stroke="#0f9a1f" strokeWidth="2" />
              </svg>
            </div>
            <span className="w-[245px] pl-[4px] border-r border-[#dcdcdc]">(-56420.38; -9830.862; 0)</span>
            <span className="w-[121px] border-r border-[#dcdcdc]" />
            <span className="pl-[5px] flex-1 text-[10.500px] tracking-[-.1px]">34491.19 x 14197.97 x 316.2111</span>
          </div>
        </div>

        {/* dropdown highlighted in red */}
        <div className="absolute left-[840px] top-[115px] w-[68px] h-[100px] border-[7px] border-t-[9px] border-[#ff3a3a] bg-linear-to-b from-[#c6c6c6] to-[#a8a8a8] flex">
          <div className="relative flex-1 -mt-[4px] grid grid-cols-2 auto-rows-[23px] justify-items-center pl-[3px]">
            <div className="flex items-center"><Clip s={0.55} /></div>
            <div className="flex items-center"><XG /></div>
            <div className="flex items-center"><Scis /></div>
            <div className="flex items-center"><PasteG /></div>
            <div className="flex items-center"><CopyG /></div>
            <div className="flex items-center"><Broom /></div>
            <div className="col-span-2 text-[12px] leading-[16px] text-center text-[#222] mt-[2px]">编辑</div>
          </div>
          <div className="w-[2px] bg-[#f2f2f2] rounded-full mr-[1px]" />
        </div>

        {/* watermark */}
        <div className="absolute left-[703px] top-[518px] w-[168px] h-[90px] flex flex-col items-center pointer-events-none font-['Liberation_Sans','Noto_Sans_CJK_SC',sans-serif]">
          <div className="flex items-end h-[52px] w-full pl-[2px]">
            <span className="text-[32px] leading-[32px] font-bold text-white/70 [-webkit-text-stroke:1px_#dedede]">Bai</span>
            <svg width={47} height={52} viewBox="0 0 47 52" className="block ml-[4px]">
              <g fill="#fcfcf6" stroke="#dcdcdc">
                <ellipse cx="17" cy="9" rx="5" ry="8" />
                <ellipse cx="31" cy="9" rx="5" ry="8" />
                <ellipse cx="6" cy="23" rx="4.500" ry="7" />
                <ellipse cx="41" cy="23" rx="4.500" ry="7" />
                <path d="M24 21C34 21 44 42 33 49C26 51 20 51 14 49C4 42 14 21 24 21Z" />
              </g>
              <text x="24" y="44" textAnchor="middle" fontSize="15" fill="#e2e2e2">du</text>
            </svg>
            <span className="text-[27px] leading-[32px] ml-[4px] font-bold text-white/70 [-webkit-text-stroke:1px_#dedede] whitespace-nowrap">经验</span>
          </div>
          <div className="mt-[6px] text-[20px] leading-[20px] text-white/70 whitespace-nowrap [-webkit-text-stroke:.5px_#d4d4d4]">jingyan.baidu.com</div>
        </div>
      </div>
    </div>
  );
}
